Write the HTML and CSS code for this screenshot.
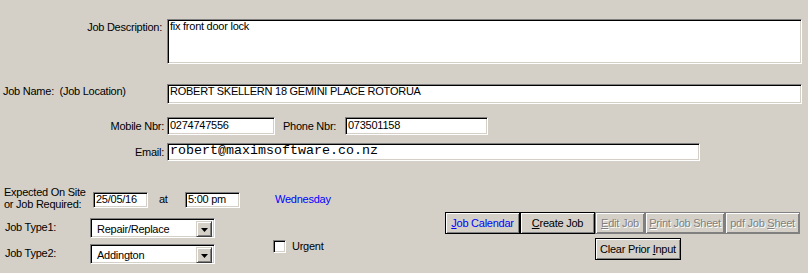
FILE: index.html
```html
<!DOCTYPE html>
<html>
<head>
<meta charset="utf-8">
<title>Job Entry</title>
<link rel="stylesheet" href="styles.css">
</head>
<body>
<div class="form">
  <div class="row row-desc">
    <span class="lbl lbl-desc">Job Description:</span>
    <div class="field textarea">fix front door lock</div>
  </div>
  <div class="row row-name">
    <span class="lbl-name">Job Name:&nbsp; (Job Location)</span>
    <div class="field name">ROBERT SKELLERN 18 GEMINI PLACE ROTORUA</div>
  </div>
  <div class="row row-phone">
    <span class="lbl lbl-mid">Mobile Nbr:</span>
    <div class="field mobile">0274747556</div>
    <span class="lbl-phone">Phone Nbr:</span>
    <div class="field phone">073501158</div>
  </div>
  <div class="row row-email">
    <span class="lbl lbl-mid">Email:</span>
    <div class="field email">robert@maximsoftware.co.nz</div>
  </div>
  <div class="bottom">
    <div class="left">
      <div class="brow brow-a">
        <div class="exp-label">Expected On Site<br>or Job Required:</div>
        <div class="field small">25/05/16</div>
        <span class="at">at</span>
        <div class="field small">5:00 pm</div>
        <span class="day">Wednesday</span>
      </div>
      <div class="brow brow-b">
        <span class="type-label">Job Type1:</span>
        <div class="field combo">
          <span class="combo-text">Repair/Replace</span>
          <span class="combo-btn"><svg width="7" height="4" viewBox="0 0 7 4"><path d="M0 0h7L3.5 4z" fill="#000"/></svg></span>
        </div>
      </div>
      <div class="brow brow-c">
        <span class="type-label type2">Job Type2:</span>
        <div class="field combo combo2">
          <span class="combo-text">Addington</span>
          <span class="combo-btn"><svg width="7" height="4" viewBox="0 0 7 4"><path d="M0 0h7L3.5 4z" fill="#000"/></svg></span>
        </div>
        <span class="field check"></span>
        <span class="urgent">Urgent</span>
      </div>
    </div>
    <div class="right">
      <div class="btn-row">
        <div class="btn default w75 blue"><u>J</u>ob Calendar</div>
        <div class="btn default w75"><u>C</u>reate Job</div>
        <div class="btn disabled w50"><u>E</u>dit Job</div>
        <div class="btn disabled w80"><u>P</u>rint Job Sheet</div>
        <div class="btn disabled w75">pdf Job <u>S</u>heet</div>
      </div>
      <div class="btn-row second">
        <div class="btn default w86">Clear Prior <u>I</u>nput</div>
      </div>
    </div>
  </div>
</div>
</body>
</html>
```

FILE: styles.css
```css
html, body {
  margin: 0;
  padding: 0;
  background: #d4d0c8;
}
body {
  font-family: "Liberation Sans", Arial, sans-serif;
  font-size: 11px;
  line-height: 13px;
  letter-spacing: -0.25px;
  color: #000;
  width: 808px;
  height: 273px;
  overflow: hidden;
}
.form {
  padding-top: 19px;
}
.row {
  display: flex;
  align-items: flex-start;
}
.field {
  box-sizing: border-box;
  background: #fff;
  border: 1px solid;
  border-color: #808080 #fff #fff #808080;
  box-shadow: inset 1px 1px 0 #000, inset -1px -1px 0 #d4d0c8;
  padding: 0 1px 0 2px;
  white-space: nowrap;
  overflow: hidden;
}
.lbl {
  box-sizing: border-box;
  width: 164px;
  margin-right: 3px;
  text-align: right;
}
.lbl-desc {
  padding-right: 2px;
  padding-top: 2px;
}
.textarea {
  width: 635px;
  height: 45px;
  padding-top: 0;
}
.row-name {
  margin-top: 20px;
}
.lbl-name {
  box-sizing: border-box;
  width: 167px;
  padding-left: 3px;
  padding-top: 1px;
  white-space: nowrap;
}
.name {
  width: 635px;
  height: 20px;
  line-height: 11px;
  padding-top: 1px;
}
.row-phone {
  margin-top: 13px;
}
.lbl-mid {
  line-height: 18px;
}
.mobile {
  width: 108px;
  height: 18px;
  line-height: 14px;
}
.lbl-phone {
  width: 62px;
  margin-left: 8px;
  line-height: 18px;
}
.phone {
  width: 143px;
  height: 18px;
  line-height: 14px;
}
.row-email {
  margin-top: 8px;
}
.email {
  width: 533px;
  height: 18px;
  font-family: "Liberation Mono", "Courier New", monospace;
  font-size: 13.33px;
  line-height: 14px;
  letter-spacing: 0;
}
.bottom {
  display: flex;
  margin-top: 25px;
}
.left {
  width: 445px;
}
.brow {
  display: flex;
  align-items: flex-start;
}
.brow-a {
  height: 24px;
}
.exp-label {
  box-sizing: border-box;
  width: 93px;
  padding-left: 4px;
  line-height: 12px;
  white-space: nowrap;
}
.small {
  width: 55px;
  height: 16px;
  margin-top: 6px;
  line-height: 12px;
}
.at {
  width: 26px;
  margin-left: 11px;
  margin-top: 7px;
}
.day {
  margin-left: 35px;
  margin-top: 7px;
  color: #0000ff;
}
.brow-b {
  margin-top: 8px;
  height: 20px;
}
.brow-c {
  margin-top: 2px;
}
.type-label {
  box-sizing: border-box;
  width: 90px;
  padding-left: 5px;
  padding-top: 3px;
}
.type-label.type2 {
  padding-top: 7px;
}
.combo {
  display: flex;
  width: 125px;
  height: 20px;
  padding: 2px 2px 2px 6px;
  line-height: 16px;
}
.combo2 {
  margin-top: 4px;
}
.combo-text {
  flex: 1;
}
.combo-btn {
  box-sizing: border-box;
  width: 16px;
  height: 16px;
  background: #d4d0c8;
  border: 1px solid;
  border-color: #d4d0c8 #404040 #404040 #d4d0c8;
  box-shadow: inset 1px 1px 0 #fff, inset -1px -1px 0 #808080;
  display: flex;
  align-items: center;
  justify-content: center;
}
.combo-btn svg {
  display: block;
  margin-top: 1px;
}
.check {
  display: block;
  width: 13px;
  height: 13px;
  margin-left: 58px;
  padding: 0;
}
.urgent {
  margin-left: 6px;
}
.right {
  padding-top: 26px;
}
.btn-row {
  display: flex;
}
.btn-row.second {
  margin-top: 4px;
  padding-left: 150px;
}
.btn {
  box-sizing: border-box;
  height: 22px;
  line-height: 20px;
  text-align: center;
  background: #d4d0c8;
  border: 1px solid #000;
  box-shadow: inset 1px 1px 0 #fff, inset -1px -1px 0 #808080;
  white-space: nowrap;
  overflow: hidden;
}
.btn u {
  text-underline-offset: 1px;
}
.btn.disabled {
  border-color: #808080;
  color: #808080;
  text-shadow: 1px 1px 0 #fff;
}
.btn.blue {
  color: #0000ff;
}
.w75 { width: 75px; }
.w50 { width: 50px; }
.w80 { width: 80px; }
.w86 { width: 86px; }
```
